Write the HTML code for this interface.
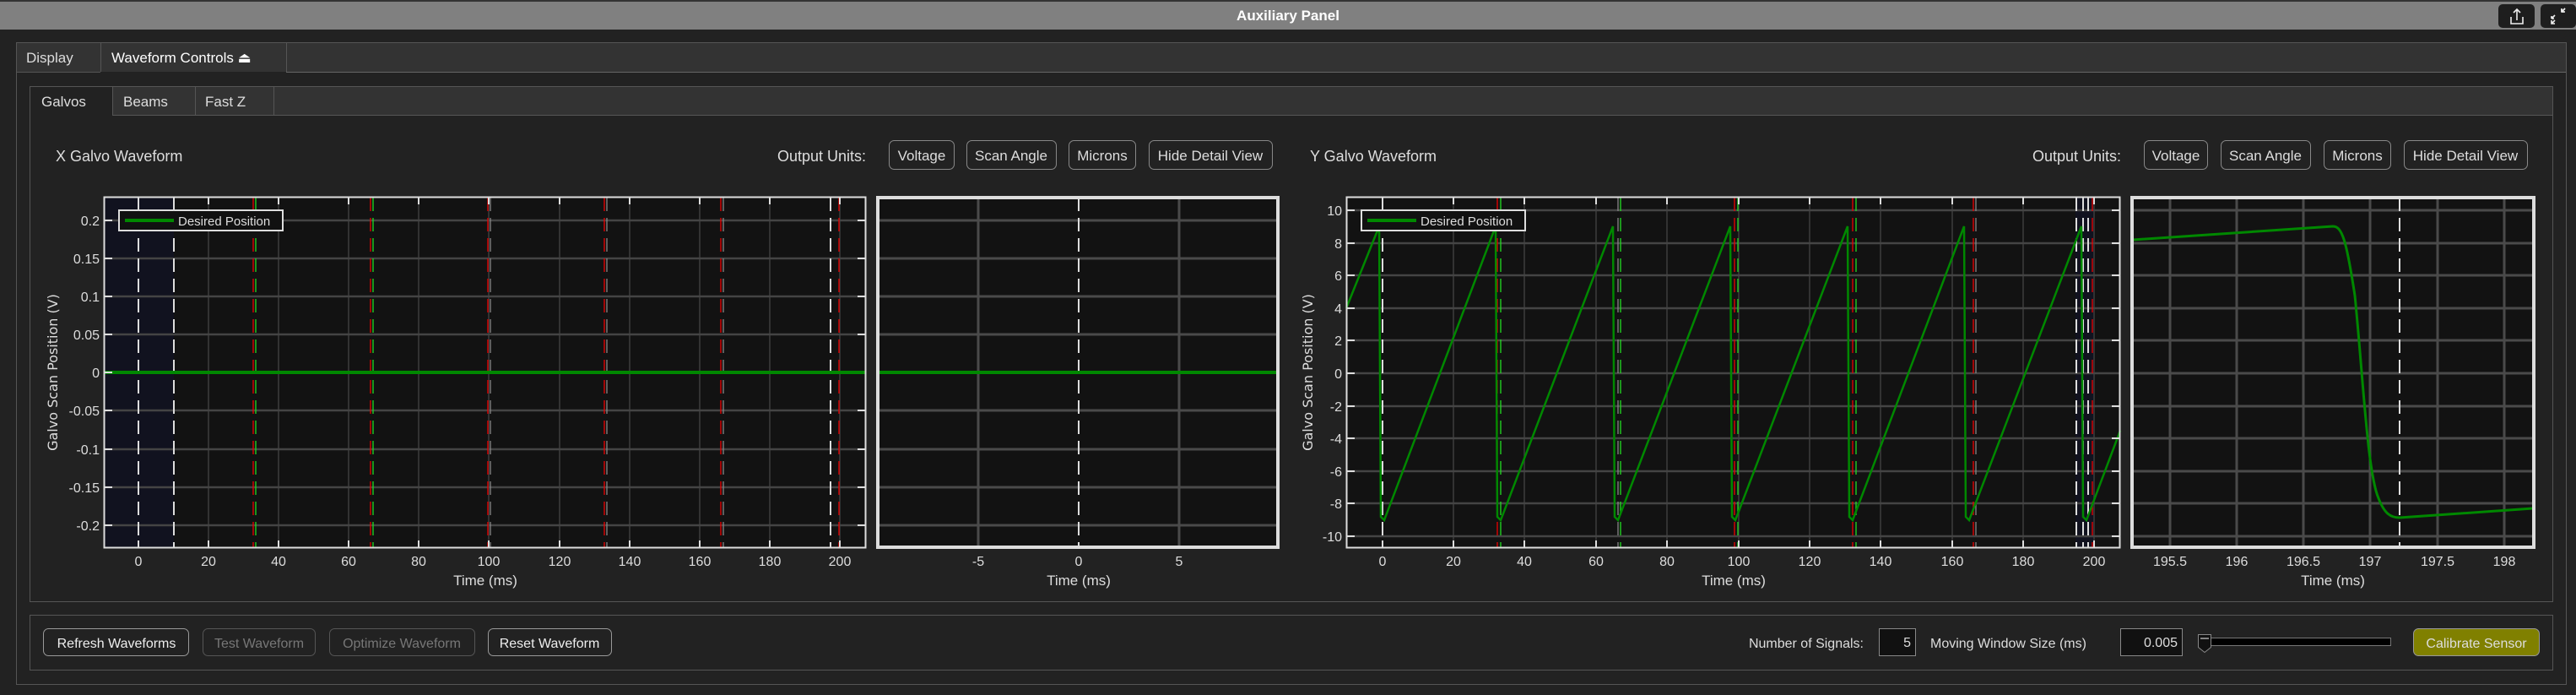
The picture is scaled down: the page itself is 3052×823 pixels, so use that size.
<!DOCTYPE html>
<html><head><meta charset="utf-8"><style>
html,body{margin:0;padding:0;background:#222;}
svg{display:block;font-family:"Liberation Sans",sans-serif;}
</style></head><body>
<svg width="3052" height="823" viewBox="0 0 3052 823" xmlns="http://www.w3.org/2000/svg">
<rect width="3052" height="823" fill="#222"/>
<!-- title bar -->
<rect x="0" y="0" width="3052" height="35" fill="#808080"/>
<rect x="0" y="0" width="3052" height="2" fill="#333"/>
<text x="1526" y="24" fill="#fff" font-size="17" font-weight="bold" text-anchor="middle">Auxiliary Panel</text>
<rect x="2960" y="5" width="43" height="28" rx="5" fill="#1e1e1e"/>
<rect x="3010" y="5" width="42" height="28" rx="5" fill="#1e1e1e"/>
<path d="M2975,20 v8 h14 v-8 M2982,24 v-13 M2978,15 l4,-4 l4,4" stroke="#eee" stroke-width="1.6" fill="none"/>
<path d="M3027,18 l-4,4 M3023,22 v-3 M3023,22 h3 M3035,14 l4,-4 M3035,14 v-3 M3035,14 h3" stroke="#eee" stroke-width="1.6" fill="none"/>
<path d="M3023,28 l4,-4 M3023,24 v4 h4 M3039,10 l-4,4 M3035,10 v4 h4" stroke="#eee" stroke-width="1.6" fill="none"/>

<!-- outer tab group -->
<rect x="19.5" y="50.5" width="3021" height="760" fill="#222" stroke="#555"/>
<rect x="20" y="51" width="3020" height="34" fill="#333"/>
<line x1="339" y1="85.5" x2="3040" y2="85.5" stroke="#666"/>
<line x1="119.5" y1="51" x2="119.5" y2="85" stroke="#555"/>
<line x1="339.5" y1="51" x2="339.5" y2="85" stroke="#555"/>
<line x1="20" y1="85.5" x2="119" y2="85.5" stroke="#555"/>
<text x="31" y="74" fill="#ddd" font-size="17">Display</text>
<text x="132" y="74" fill="#fff" font-size="17">Waveform Controls ⏏</text>

<!-- inner tab group -->
<rect x="35.5" y="102.5" width="2989" height="610" fill="#222" stroke="#555"/>
<rect x="36" y="103" width="2988" height="33" fill="#333"/>
<rect x="36" y="103" width="97" height="34" fill="#222"/>
<line x1="133" y1="136.5" x2="3024" y2="136.5" stroke="#555"/>
<line x1="133.5" y1="103" x2="133.5" y2="136" stroke="#555"/>
<line x1="231.5" y1="103" x2="231.5" y2="136" stroke="#555"/>
<line x1="324.5" y1="103" x2="324.5" y2="136" stroke="#555"/>
<text x="49" y="126" fill="#ddd" font-size="17">Galvos</text>
<text x="146" y="126" fill="#ddd" font-size="17">Beams</text>
<text x="243" y="126" fill="#ddd" font-size="17">Fast Z</text>

<!-- headers -->
<g font-size="18" fill="#ddd">
<text x="66" y="191">X Galvo Waveform</text>
<text x="1552" y="191">Y Galvo Waveform</text>
<text x="921" y="191">Output Units:</text>
<text x="2408" y="191">Output Units:</text>
</g>
<g fill="#222" stroke="#888" stroke-width="1">
<rect x="1053.5" y="166.5" width="77" height="34" rx="6"/>
<rect x="1145.5" y="166.5" width="106" height="34" rx="6"/>
<rect x="1266.5" y="166.5" width="79" height="34" rx="6"/>
<rect x="1361.5" y="166.5" width="146" height="34" rx="6"/>
<rect x="2540.5" y="166.5" width="75" height="34" rx="6"/>
<rect x="2631.5" y="166.5" width="106" height="34" rx="6"/>
<rect x="2753.5" y="166.5" width="79" height="34" rx="6"/>
<rect x="2848.5" y="166.5" width="146" height="34" rx="6"/>
</g>
<g font-size="17" fill="#ddd" text-anchor="middle">
<text x="1092" y="190">Voltage</text>
<text x="1198" y="190">Scan Angle</text>
<text x="1306" y="190">Microns</text>
<text x="1434" y="190">Hide Detail View</text>
<text x="2578" y="190">Voltage</text>
<text x="2684" y="190">Scan Angle</text>
<text x="2793" y="190">Microns</text>
<text x="2921" y="190">Hide Detail View</text>
</g>

<!-- ============ X plot ============ -->
<rect x="123" y="233" width="903" height="416" fill="#121212"/>
<rect x="124" y="234" width="82" height="414" fill="#11121f"/>
<g stroke="#3c3c3c" stroke-width="1.5">
<line x1="247" y1="233" x2="247" y2="649"/><line x1="330" y1="233" x2="330" y2="649"/><line x1="413" y1="233" x2="413" y2="649"/><line x1="496" y1="233" x2="496" y2="649"/><line x1="579" y1="233" x2="579" y2="649"/><line x1="663" y1="233" x2="663" y2="649"/><line x1="746" y1="233" x2="746" y2="649"/><line x1="829" y1="233" x2="829" y2="649"/><line x1="912" y1="233" x2="912" y2="649"/><line x1="995" y1="233" x2="995" y2="649"/>
</g>
<g stroke="#444" stroke-width="2.5">
<line x1="123" y1="261" x2="1026" y2="261"/><line x1="123" y1="306" x2="1026" y2="306"/><line x1="123" y1="351" x2="1026" y2="351"/><line x1="123" y1="396" x2="1026" y2="396"/><line x1="123" y1="486" x2="1026" y2="486"/><line x1="123" y1="532" x2="1026" y2="532"/><line x1="123" y1="577" x2="1026" y2="577"/><line x1="123" y1="622" x2="1026" y2="622"/>
</g>
<g stroke-dasharray="16,8" stroke-width="2">
<line x1="164" y1="234" x2="164" y2="648" stroke="#ddd"/>
<line x1="206" y1="234" x2="206" y2="648" stroke="#ddd"/>
<line x1="984" y1="234" x2="984" y2="648" stroke="#ddd"/>
</g>
<g stroke-dasharray="16,8" stroke-width="1.3">
<line x1="300" y1="234" x2="300" y2="648" stroke="#e00"/><line x1="303" y1="234" x2="303" y2="648" stroke="#2d2"/>
<line x1="439" y1="234" x2="439" y2="648" stroke="#e00"/><line x1="442" y1="234" x2="442" y2="648" stroke="#2d2"/>
<line x1="578" y1="234" x2="578" y2="648" stroke="#e00"/><line x1="581" y1="234" x2="581" y2="648" stroke="#888"/>
<line x1="716" y1="234" x2="716" y2="648" stroke="#e00"/><line x1="719" y1="234" x2="719" y2="648" stroke="#888"/>
<line x1="854" y1="234" x2="854" y2="648" stroke="#e00"/><line x1="857" y1="234" x2="857" y2="648" stroke="#888"/>
<line x1="994" y1="234" x2="994" y2="648" stroke="#e00"/>
</g>
<line x1="123" y1="441" x2="1026" y2="441" stroke="#080" stroke-width="4"/>
<g stroke="#ddd" stroke-width="2">
<path d="M164,649v-9M247,649v-9M330,649v-9M413,649v-9M496,649v-9M579,649v-9M663,649v-9M746,649v-9M829,649v-9M912,649v-9M995,649v-9M164,233v9M247,233v9M330,233v9M413,233v9M496,233v9M579,233v9M663,233v9M746,233v9M829,233v9M912,233v9M995,233v9"/>
<path d="M123,261h10M123,306h10M123,351h10M123,396h10M123,441h10M123,486h10M123,532h10M123,577h10M123,622h10M1026,261h-10M1026,306h-10M1026,351h-10M1026,396h-10M1026,486h-10M1026,532h-10M1026,577h-10M1026,622h-10"/>
</g>
<rect x="123.5" y="233.5" width="902" height="415" fill="none" stroke="#ddd" stroke-width="2"/>
<rect x="141" y="249" width="194" height="24" fill="#111" stroke="#ddd" stroke-width="2"/>
<line x1="148" y1="261" x2="206" y2="261" stroke="#080" stroke-width="4"/>
<text x="211" y="267" fill="#ddd" font-size="15">Desired Position</text>
<g font-size="16" fill="#ddd" text-anchor="end">
<text x="118" y="267">0.2</text><text x="118" y="312">0.15</text><text x="118" y="357">0.1</text><text x="118" y="402">0.05</text><text x="118" y="447">0</text><text x="118" y="492">-0.05</text><text x="118" y="538">-0.1</text><text x="118" y="583">-0.15</text><text x="118" y="628">-0.2</text>
</g>
<g font-size="16" fill="#ddd" text-anchor="middle">
<text x="164" y="670">0</text><text x="247" y="670">20</text><text x="330" y="670">40</text><text x="413" y="670">60</text><text x="496" y="670">80</text><text x="579" y="670">100</text><text x="663" y="670">120</text><text x="746" y="670">140</text><text x="829" y="670">160</text><text x="912" y="670">180</text><text x="995" y="670">200</text>
<text x="575" y="693" font-size="17">Time (ms)</text>
</g>
<text transform="translate(68,441) rotate(-90)" font-family="DejaVu Sans, sans-serif" font-size="16" fill="#ddd" text-anchor="middle">Galvo Scan Position (V)</text>

<!-- X detail -->
<rect x="1039" y="233" width="476" height="416" fill="#121212"/>
<g stroke="#4a4a4a" stroke-width="3">
<line x1="1159" y1="233" x2="1159" y2="649"/><line x1="1397" y1="233" x2="1397" y2="649"/>
<line x1="1039" y1="261" x2="1515" y2="261"/><line x1="1039" y1="306" x2="1515" y2="306"/><line x1="1039" y1="351" x2="1515" y2="351"/><line x1="1039" y1="396" x2="1515" y2="396"/><line x1="1039" y1="486" x2="1515" y2="486"/><line x1="1039" y1="532" x2="1515" y2="532"/><line x1="1039" y1="577" x2="1515" y2="577"/><line x1="1039" y1="622" x2="1515" y2="622"/>
</g>
<line x1="1278" y1="234" x2="1278" y2="648" stroke="#ddd" stroke-width="2" stroke-dasharray="16,8"/>
<line x1="1039" y1="441" x2="1515" y2="441" stroke="#080" stroke-width="4"/>
<rect x="1040" y="234" width="474" height="414" fill="none" stroke="#ddd" stroke-width="4"/>
<g font-size="16" fill="#ddd" text-anchor="middle">
<text x="1159" y="670">-5</text><text x="1278" y="670">0</text><text x="1397" y="670">5</text>
<text x="1278" y="693" font-size="17">Time (ms)</text>
</g>

<!-- ============ Y plot ============ -->
<rect x="1595" y="233" width="917" height="416" fill="#121212"/>
<rect x="2459" y="234" width="22" height="414" fill="#11121f"/>
<g stroke="#3c3c3c" stroke-width="1.5">
<line x1="1722" y1="233" x2="1722" y2="649"/><line x1="1806" y1="233" x2="1806" y2="649"/><line x1="1891" y1="233" x2="1891" y2="649"/><line x1="1975" y1="233" x2="1975" y2="649"/><line x1="2060" y1="233" x2="2060" y2="649"/><line x1="2144" y1="233" x2="2144" y2="649"/><line x1="2228" y1="233" x2="2228" y2="649"/><line x1="2313" y1="233" x2="2313" y2="649"/><line x1="2397" y1="233" x2="2397" y2="649"/><line x1="2481" y1="233" x2="2481" y2="649"/>
</g>
<g stroke="#444" stroke-width="2.5">
<line x1="1595" y1="249" x2="2512" y2="249"/><line x1="1595" y1="288" x2="2512" y2="288"/><line x1="1595" y1="326" x2="2512" y2="326"/><line x1="1595" y1="365" x2="2512" y2="365"/><line x1="1595" y1="403" x2="2512" y2="403"/><line x1="1595" y1="442" x2="2512" y2="442"/><line x1="1595" y1="481" x2="2512" y2="481"/><line x1="1595" y1="519" x2="2512" y2="519"/><line x1="1595" y1="558" x2="2512" y2="558"/><line x1="1595" y1="596" x2="2512" y2="596"/><line x1="1595" y1="635" x2="2512" y2="635"/>
</g>
<g stroke-dasharray="16,8" stroke-width="2" stroke="#ddd">
<line x1="1638" y1="234" x2="1638" y2="648"/>
<line x1="2460" y1="234" x2="2460" y2="648"/><line x1="2468" y1="234" x2="2468" y2="648"/><line x1="2474" y1="234" x2="2474" y2="648"/>
</g>
<g stroke-dasharray="16,8" stroke-width="1.3">
<line x1="1774" y1="234" x2="1774" y2="648" stroke="#e00"/><line x1="1778" y1="234" x2="1778" y2="648" stroke="#2d2"/>
<line x1="1917" y1="234" x2="1917" y2="648" stroke="#888"/><line x1="1920" y1="234" x2="1920" y2="648" stroke="#2d2"/>
<line x1="2055" y1="234" x2="2055" y2="648" stroke="#e00"/><line x1="2059" y1="234" x2="2059" y2="648" stroke="#2d2"/>
<line x1="2195" y1="234" x2="2195" y2="648" stroke="#e00"/><line x1="2199" y1="234" x2="2199" y2="648" stroke="#2d2"/>
<line x1="2338" y1="234" x2="2338" y2="648" stroke="#e00"/><line x1="2341" y1="234" x2="2341" y2="648" stroke="#888"/>
<line x1="2479" y1="234" x2="2479" y2="648" stroke="#e00"/>
</g>
<path d="M1595,365 L1634,268 L1636,612 L1640,616 L1772,268 L1774,612 L1778,616 L1911,268 L1913,612 L1917,616 L2050,268 L2052,612 L2056,616 L2189,268 L2191,612 L2195,616 L2327,268 L2329,612 L2333,616 L2466,268 L2468,612 L2472,616 L2512,510" fill="none" stroke="#080" stroke-width="2.5"/>
<g stroke="#ddd" stroke-width="2">
<path d="M1638,649v-9M1722,649v-9M1806,649v-9M1891,649v-9M1975,649v-9M2060,649v-9M2144,649v-9M2228,649v-9M2313,649v-9M2397,649v-9M2481,649v-9M1638,233v9M1722,233v9M1806,233v9M1891,233v9M1975,233v9M2060,233v9M2144,233v9M2228,233v9M2313,233v9M2397,233v9M2481,233v9"/>
<path d="M1595,249h10M1595,288h10M1595,326h10M1595,365h10M1595,403h10M1595,442h10M1595,481h10M1595,519h10M1595,558h10M1595,596h10M1595,635h10M2512,249h-10M2512,288h-10M2512,326h-10M2512,365h-10M2512,403h-10M2512,481h-10M2512,519h-10M2512,558h-10M2512,596h-10M2512,635h-10"/>
</g>
<rect x="1595.5" y="233.5" width="916" height="415" fill="none" stroke="#ddd" stroke-width="2"/>
<rect x="1613" y="249" width="194" height="24" fill="#111" stroke="#ddd" stroke-width="2"/>
<line x1="1620" y1="261" x2="1678" y2="261" stroke="#080" stroke-width="4"/>
<text x="1683" y="267" fill="#ddd" font-size="15">Desired Position</text>
<g font-size="16" fill="#ddd" text-anchor="end">
<text x="1590" y="255">10</text><text x="1590" y="294">8</text><text x="1590" y="332">6</text><text x="1590" y="371">4</text><text x="1590" y="409">2</text><text x="1590" y="448">0</text><text x="1590" y="487">-2</text><text x="1590" y="525">-4</text><text x="1590" y="564">-6</text><text x="1590" y="602">-8</text><text x="1590" y="641">-10</text>
</g>
<g font-size="16" fill="#ddd" text-anchor="middle">
<text x="1638" y="670">0</text><text x="1722" y="670">20</text><text x="1806" y="670">40</text><text x="1891" y="670">60</text><text x="1975" y="670">80</text><text x="2060" y="670">100</text><text x="2144" y="670">120</text><text x="2228" y="670">140</text><text x="2313" y="670">160</text><text x="2397" y="670">180</text><text x="2481" y="670">200</text>
<text x="2054" y="693" font-size="17">Time (ms)</text>
</g>
<text transform="translate(1555,441) rotate(-90)" font-family="DejaVu Sans, sans-serif" font-size="16" fill="#ddd" text-anchor="middle">Galvo Scan Position (V)</text>

<!-- Y detail -->
<rect x="2525" y="233" width="478" height="416" fill="#121212"/>
<g stroke="#4a4a4a" stroke-width="3">
<line x1="2571" y1="233" x2="2571" y2="649"/><line x1="2650" y1="233" x2="2650" y2="649"/><line x1="2729" y1="233" x2="2729" y2="649"/><line x1="2808" y1="233" x2="2808" y2="649"/><line x1="2888" y1="233" x2="2888" y2="649"/><line x1="2967" y1="233" x2="2967" y2="649"/>
<line x1="2525" y1="249" x2="3003" y2="249"/><line x1="2525" y1="288" x2="3003" y2="288"/><line x1="2525" y1="326" x2="3003" y2="326"/><line x1="2525" y1="365" x2="3003" y2="365"/><line x1="2525" y1="403" x2="3003" y2="403"/><line x1="2525" y1="442" x2="3003" y2="442"/><line x1="2525" y1="481" x2="3003" y2="481"/><line x1="2525" y1="519" x2="3003" y2="519"/><line x1="2525" y1="558" x2="3003" y2="558"/><line x1="2525" y1="596" x2="3003" y2="596"/><line x1="2525" y1="635" x2="3003" y2="635"/>
</g>
<line x1="2843" y1="234" x2="2843" y2="648" stroke="#ddd" stroke-width="2" stroke-dasharray="16,8"/>
<path d="M2527,284 L2764,268 C2775,268 2780,285 2790,350 C2800,450 2805,560 2818,590 C2825,608 2832,613 2843,613 L3001,602" fill="none" stroke="#080" stroke-width="3"/>
<rect x="2526" y="234" width="476" height="414" fill="none" stroke="#ddd" stroke-width="4"/>
<g font-size="16" fill="#ddd" text-anchor="middle">
<text x="2571" y="670">195.5</text><text x="2650" y="670">196</text><text x="2729" y="670">196.5</text><text x="2808" y="670">197</text><text x="2888" y="670">197.5</text><text x="2967" y="670">198</text>
<text x="2764" y="693" font-size="17">Time (ms)</text>
</g>

<!-- bottom panel -->
<rect x="35.5" y="728.5" width="2989" height="65" fill="#222" stroke="#555"/>
<g fill="#222" stroke-width="1">
<rect x="51.5" y="744.5" width="172" height="32" rx="6" stroke="#999"/>
<rect x="240.5" y="744.5" width="133" height="32" rx="6" stroke="#555"/>
<rect x="390.5" y="744.5" width="172" height="32" rx="6" stroke="#555"/>
<rect x="578.5" y="744.5" width="146" height="32" rx="6" stroke="#999"/>
</g>
<g font-size="16" text-anchor="middle">
<text x="138" y="767" fill="#eee">Refresh Waveforms</text>
<text x="307" y="767" fill="#777">Test Waveform</text>
<text x="476" y="767" fill="#777">Optimize Waveform</text>
<text x="651" y="767" fill="#eee">Reset Waveform</text>
</g>
<text x="2208" y="767" fill="#ddd" font-size="16" text-anchor="end">Number of Signals:</text>
<rect x="2226.5" y="744.5" width="43" height="32" fill="#111" stroke="#888"/>
<text x="2264" y="766" fill="#ddd" font-size="16" text-anchor="end">5</text>
<text x="2287" y="767" fill="#ddd" font-size="16">Moving Window Size (ms)</text>
<rect x="2512.5" y="744.5" width="73" height="32" fill="#111" stroke="#888"/>
<text x="2580" y="766" fill="#ddd" font-size="16" text-anchor="end">0.005</text>
<rect x="2612.5" y="755.5" width="220" height="9" fill="#000" stroke="#777"/>
<path d="M2604.5,751.5 h15 v15 l-7.5,6 l-7.5,-6 z" fill="#111" stroke="#888"/>
<line x1="2607" y1="756" x2="2617" y2="756" stroke="#aaa" stroke-width="1.5"/>
<rect x="2859.5" y="744.5" width="149" height="32" rx="6" fill="#808000" stroke="#999"/>
<text x="2934" y="767" fill="#ddd" font-size="16" text-anchor="middle">Calibrate Sensor</text>
</svg>
</body></html>
